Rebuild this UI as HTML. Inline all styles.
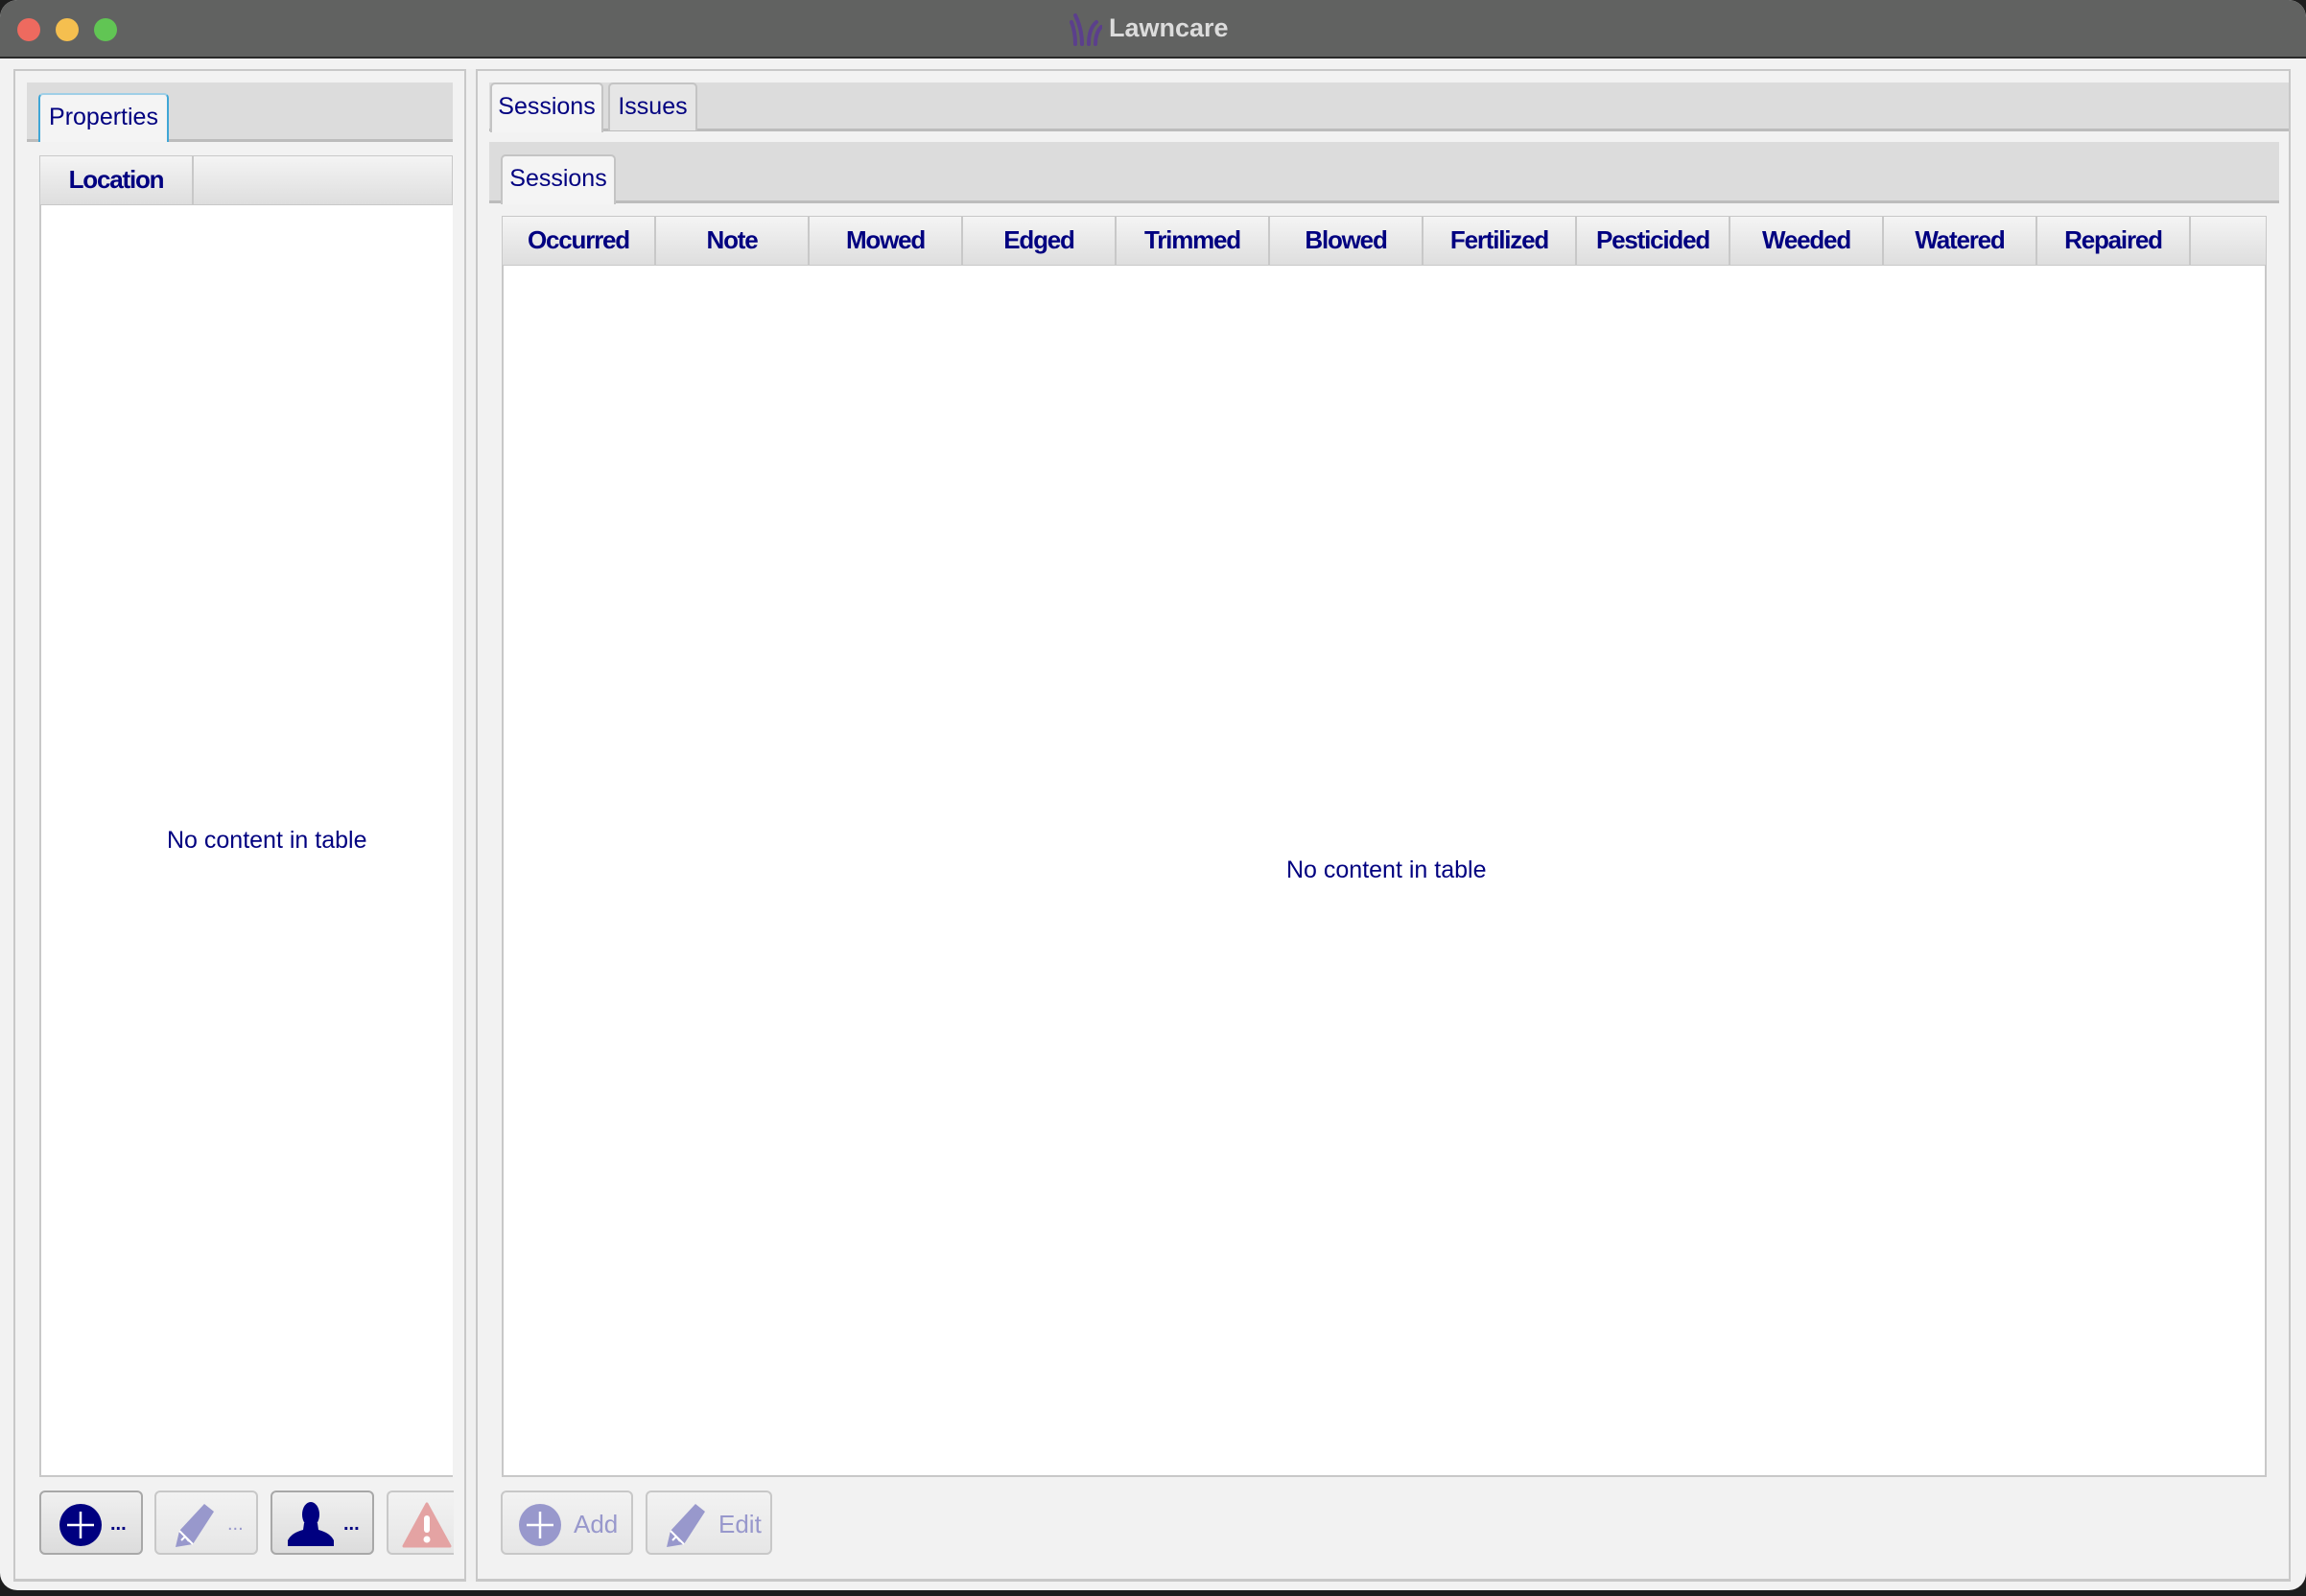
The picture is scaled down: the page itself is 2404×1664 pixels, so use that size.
<!DOCTYPE html>
<html><head><meta charset="utf-8"><style>
*{box-sizing:border-box;margin:0;padding:0}
body{width:2404px;height:1664px;background:#1e1e1e;position:relative;overflow:hidden;font-family:"Liberation Sans",sans-serif;color:#000080}
.a{position:absolute}
#win{left:0;top:0;width:2404px;height:1658px;background:#f2f2f2;border-radius:18px;overflow:hidden}
#tb{left:0;top:0;width:2404px;height:61px;background:#616261;border-bottom:2px solid #2a2a2a}
.dot{top:19px;width:24px;height:24px;border-radius:50%}
.hdr{background:linear-gradient(#f4f4f4,#dedede);border:1px solid #c8c8c8;font-weight:bold;font-size:26px;letter-spacing:-1.2px;text-align:center;line-height:48px}
.tabbar{background:#dcdcdc;border-bottom:3px solid #bcbcbc}
.tab{background:#f4f4f4;border:2px solid #c4c4c4;border-bottom:none;border-radius:5px 5px 0 0;font-size:25px;text-align:center;line-height:46px}
.btn{border:2px solid #c8c8c8;border-radius:6px;background:linear-gradient(#f2f2f2,#e6e6e6)}
.btn.on{border-color:#a8a8a8;background:linear-gradient(#f0f0f0,#dcdcdc)}
.empty{font-size:25px;color:#000080}
</style></head><body>
<div id="win" class="a">
 <div id="tb" class="a">
  <div class="a dot" style="left:18px;background:#ee6a5f"></div>
  <div class="a dot" style="left:58px;background:#f5bf4f"></div>
  <div class="a dot" style="left:98px;background:#61c554"></div>
  <svg class="a" style="left:1115px;top:14px" width="34" height="34" viewBox="0 0 34 34"><g fill="none" stroke="#5b3f8c" stroke-width="4" stroke-linecap="round"><path d="M6 32 C6 22 4 14 2 9"/><path d="M13 32 C13 20 10 10 6 2"/><path d="M20 32 C20 22 22 14 28 9"/><path d="M27 32 C27 24 29 18 33 14"/></g></svg>
  <div class="a" style="left:1156px;top:14px;font-size:27px;font-weight:bold;color:#dcdcdc">Lawncare</div>
 </div>
 <div class="a" style="left:14px;top:72px;width:471px;height:1577px;border:2px solid #c8c8c8;border-right:none;border-bottom:3px solid #c8c8c8"></div>
 <div class="a" style="left:484px;top:72px;width:14px;height:1577px;border-left:2px solid #c8c8c8;border-right:2px solid #c8c8c8;background:#f0f0f0"></div>
 <div class="a" style="left:498px;top:72px;width:1890px;height:1577px;border-top:2px solid #c8c8c8;border-bottom:3px solid #c8c8c8;border-right:2px solid #c8c8c8"></div>
 <div class="a tabbar" style="left:28px;top:86px;width:444px;height:62px"></div>
 <div class="a tab" style="left:40px;top:97px;width:136px;height:51px;border-color:#3fa6d6;border-top-color:#9fcfe6">Properties</div>
 <div class="a" style="left:41px;top:162px;width:431px;height:1378px;background:#fff;border:2px solid #c8c8c8;border-right:none"></div>
 <div class="a hdr" style="left:41px;top:162px;width:160px;height:52px">Location</div>
 <div class="a hdr" style="left:201px;top:162px;width:271px;height:52px"></div>
 <div class="a empty" style="left:174px;top:862px">No content in table</div>
 <div class="a btn on" style="left:41px;top:1554px;width:108px;height:67px"><svg class="a" style="left:18px;top:11px" width="46" height="46"><ellipse cx="23" cy="23" rx="22" ry="22" fill="#000080"/><path d="M23 9V37M9 23H37" stroke="#fff" stroke-width="2.5"/></svg><div class="a" style="left:72px;top:22px;font-size:20px;font-weight:bold">...</div></div>
 <div class="a btn" style="left:161px;top:1554px;width:108px;height:67px"><svg class="a" style="left:16px;top:10px" width="46" height="48" viewBox="0 0 46 48"><path d="M34 2 L44 10 L22 44 L4 47 L8 30 Z" fill="#9898cc"/><path d="M8 30 L22 44 M10 40 L14 36 L18 41" stroke="#fff" stroke-width="2" fill="none"/></svg><div class="a" style="left:74px;top:22px;font-size:20px;color:#9898cc">...</div></div>
 <div class="a btn on" style="left:282px;top:1554px;width:108px;height:67px"><svg class="a" style="left:14px;top:10px" width="52" height="46" viewBox="0 0 52 46"><ellipse cx="26" cy="13" rx="9" ry="13" fill="#000080"/><path d="M19 22 L33 22 L34 29 Q46 32 50 40 L50 46 L2 46 L2 40 Q6 32 18 29 Z" fill="#000080"/></svg><div class="a" style="left:74px;top:22px;font-size:20px;font-weight:bold">...</div></div>
 <div class="a btn" style="left:403px;top:1554px;width:70px;height:67px;border-right:none;border-radius:6px 0 0 6px"><svg class="a" style="left:14px;top:10px" width="52" height="48"><path d="M26 2 L50 46 L2 46 Z" fill="#e4a3a3" stroke="#e4a3a3" stroke-linejoin="round" stroke-width="3"/><rect x="23" y="14" width="6" height="18" rx="3" fill="#fff"/><circle cx="26" cy="39" r="3.5" fill="#fff"/></svg></div>
 <div class="a tabbar" style="left:510px;top:86px;width:1876px;height:51px"></div>
 <div class="a tab" style="left:511px;top:86px;width:118px;height:52px;border-bottom:none">Sessions</div>
 <div class="a tab" style="left:634px;top:86px;width:93px;height:50px;background:#e6e6e6">Issues</div>
 <div class="a tabbar" style="left:510px;top:148px;width:1866px;height:64px"></div>
 <div class="a tab" style="left:522px;top:161px;width:120px;height:52px">Sessions</div>
 <div class="a" style="left:523px;top:225px;width:1840px;height:1315px;background:#fff;border:2px solid #c8c8c8"></div>
 <div class="a hdr" style="left:523px;top:225px;width:160px;height:52px">Occurred</div>
 <div class="a hdr" style="left:683px;top:225px;width:160px;height:52px">Note</div>
 <div class="a hdr" style="left:843px;top:225px;width:160px;height:52px">Mowed</div>
 <div class="a hdr" style="left:1003px;top:225px;width:160px;height:52px">Edged</div>
 <div class="a hdr" style="left:1163px;top:225px;width:160px;height:52px">Trimmed</div>
 <div class="a hdr" style="left:1323px;top:225px;width:160px;height:52px">Blowed</div>
 <div class="a hdr" style="left:1483px;top:225px;width:160px;height:52px">Fertilized</div>
 <div class="a hdr" style="left:1643px;top:225px;width:160px;height:52px">Pesticided</div>
 <div class="a hdr" style="left:1803px;top:225px;width:160px;height:52px">Weeded</div>
 <div class="a hdr" style="left:1963px;top:225px;width:160px;height:52px">Watered</div>
 <div class="a hdr" style="left:2123px;top:225px;width:160px;height:52px">Repaired</div>
 <div class="a hdr" style="left:2283px;top:225px;width:80px;height:52px"></div>
 <div class="a empty" style="left:1341px;top:893px">No content in table</div>
 <div class="a btn" style="left:522px;top:1554px;width:138px;height:67px"><svg class="a" style="left:16px;top:11px" width="46" height="46"><circle cx="23" cy="23" r="22" fill="#9898cc"/><path d="M23 9V37M9 23H37" stroke="#fff" stroke-width="2.5"/></svg><div class="a" style="left:74px;top:18px;font-size:26px;color:#9898cc">Add</div></div>
 <div class="a btn" style="left:673px;top:1554px;width:132px;height:67px"><svg class="a" style="left:16px;top:10px" width="46" height="48" viewBox="0 0 46 48"><path d="M34 2 L44 10 L22 44 L4 47 L8 30 Z" fill="#9898cc"/><path d="M8 30 L22 44 M10 40 L14 36 L18 41" stroke="#fff" stroke-width="2" fill="none"/></svg><div class="a" style="left:74px;top:18px;font-size:26px;color:#9898cc">Edit</div></div>
</div>
</body></html>
